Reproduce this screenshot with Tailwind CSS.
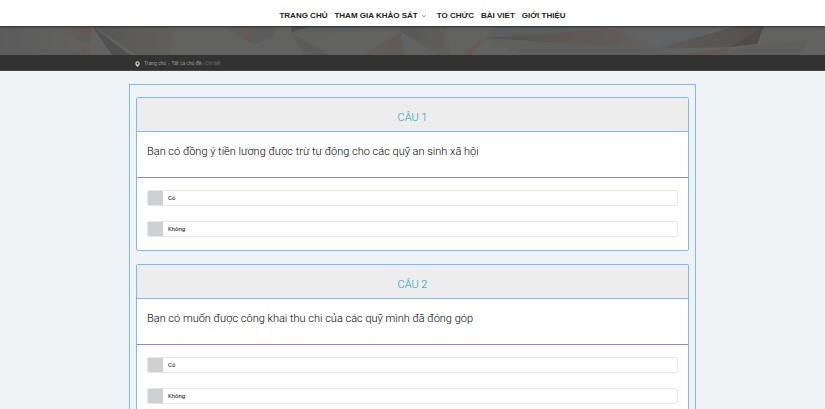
<!DOCTYPE html>
<html lang="vi">
<head>
  <meta charset="UTF-8" />
  <meta name="viewport" content="width=device-width, initial-scale=1.0" />
  <title>Khảo sát</title>
  <script src="https://cdn.jsdelivr.net/npm/@tailwindcss/browser@4"></script>
</head>
<body class="bg-[#eff3f5] font-[Roboto,sans-serif] text-black">
  <!-- Menu -->
  <header class="relative bg-white shadow-[0_1px_2px_rgba(0,0,0,0.5)]">
    <nav class="flex h-[26px] items-center justify-center gap-[7px] pt-[5px] pl-5 font-['Liberation_Sans',sans-serif] text-[8px] font-bold whitespace-nowrap text-[#222222]">
      <a href="#">TRANG CHỦ</a>
      <a href="#" class="flex items-center gap-1">
        THAM GIA KHẢO SÁT
        <svg class="mr-1 h-1 w-1" viewBox="0 0 4 4" fill="none" stroke="#555555" stroke-width="0.8"><path d="M0.4 1.2 2 2.8 3.6 1.2" /></svg>
      </a>
      <a href="#">TỔ CHỨC</a>
      <a href="#">BÀI VIẾT</a>
      <a href="#">GIỚI THIỆU</a>
    </nav>
  </header>

  <!-- Banner -->
  <div class="h-[29px] bg-[#626261]">
    <svg class="h-full w-full" viewBox="0 0 825 29" preserveAspectRatio="none">
      <defs>
        <linearGradient id="warm"><stop offset="0" stop-color="#60605f" /><stop offset="1" stop-color="#615a56" /></linearGradient>
        <linearGradient id="cool"><stop offset="0" stop-color="#565857" /><stop offset="1" stop-color="#625f5b" /></linearGradient>
        <linearGradient id="dark"><stop offset="0" stop-color="#5e5d5c" /><stop offset="1" stop-color="#534f4d" /></linearGradient>
        <linearGradient id="left"><stop offset="0" stop-color="#5b5c5b" /><stop offset="1" stop-color="#636261" /></linearGradient>
        <linearGradient id="beam"><stop offset="0" stop-color="#535452" /><stop offset="0.6" stop-color="#5f5955" /><stop offset="1" stop-color="#62605e" /></linearGradient>
      </defs>
      <path d="M0 0H45L90 19 70 29H0Z" fill="url(#left)" />
      <path d="M45 0H91V19Z" fill="url(#warm)" />
      <path d="M90 19V29H70Z" fill="#625d5a" />
      <path d="M92 0H176L170 29H137Z" fill="url(#cool)" />
      <path d="M92 0 130 29H112Z" fill="#505050" />
      <path d="M221 0H254V19Z" fill="url(#warm)" />
      <path d="M254 19 275 10V0H254Z" fill="#5d5d5d" />
      <path d="M291 0H310L291 7Z" fill="#4f5050" />
      <path d="M310 0H400L401 5 291 7Z" fill="#5d5e5e" />
      <path d="M291 7 330 29H304Z" fill="#5b5b5a" />
      <path d="M401 6 404 29H362Z" fill="url(#warm)" />
      <path d="M400 0H446L452 29H439L401 6Z" fill="url(#cool)" />
      <path d="M484 12 497 0H600V3Z" fill="#5b5f5f" />
      <path d="M484 12 472 29H462Z" fill="#675b53" />
      <path d="M484 12 520 29H680L655 23Z" fill="#5f605e" />
      <path d="M484 12 618 2 655 23Z" fill="url(#beam)" />
      <path d="M618 2H736L655 23Z" fill="#606263" />
      <path d="M655 23 737 0H764L730 21Z" fill="url(#dark)" />
      <path d="M730 21 764 0 757 18Z" fill="#504b4a" />
      <path d="M677 29 730 22 725 29Z" fill="#615a56" />
      <path d="M735 23 808 14 800 29H725Z" fill="#5f5f5e" />
    </svg>
  </div>

  <!-- Breadcrumb -->
  <div class="border-b border-[#444444] bg-[#323232]">
    <div class="mx-auto flex h-[15px] max-w-[567px] items-center pt-[2px] pl-[6px] text-[5px] text-[#999999]">
      <svg class="mr-1 h-[6px] w-[5px]" viewBox="0 0 5 6"><path fill="#cccccc" fill-rule="evenodd" d="M2.5 0.3A2.2 2.2 0 0 0 .3 2.5C.3 4 1.5 5.1 2.5 6 3.5 5.1 4.7 4 4.7 2.5A2.2 2.2 0 0 0 2.5.3ZM2.5 1.6A.9.9 0 1 1 2.5 3.4.9.9 0 0 1 2.5 1.6Z" /></svg>
      <a href="#">Trang chủ</a>
      <span class="mx-[2px]">›</span>
      <a href="#">Tất cả chủ đề</a>
      <span class="mx-px">›</span>
      <span class="text-[#707070]">Chi tiết</span>
    </div>
  </div>

  <!-- Danh sách câu hỏi -->
  <main class="mx-auto mt-[13px] flex max-w-[567px] flex-col gap-[13px] border border-[#7db8fa] px-[6px] py-3">
    <fieldset class="rounded-[2px] border border-[#7db8fa] bg-white">
      <h2 class="border-b border-[#7db8fa] bg-[#ededed] pt-3 pb-[5px] text-center text-[11px] leading-4 font-light text-[#17a2b8]">CÂU 1</h2>
      <p class="border-b border-[#8c83f7] px-[10px] pt-3 pb-[17px] text-[11px] leading-4 font-light">Bạn có đồng ý tiền lương được trừ tự động cho các quỹ an sinh xã hội</p>
      <div class="flex flex-col gap-[15px] px-[10px] pt-3 pb-[13px]">
        <label class="flex h-4 items-center overflow-hidden rounded-[2px] border border-[#e4e6e8] text-[6px]">
          <input type="radio" name="cau1" class="h-full w-[15px] appearance-none bg-[#ced0d2] checked:bg-[#17a2b8]" />
          <span class="pb-px pl-[5px]">Có</span>
        </label>
        <label class="flex h-4 items-center overflow-hidden rounded-[2px] border border-[#e4e6e8] text-[6px]">
          <input type="radio" name="cau1" class="h-full w-[15px] appearance-none bg-[#ced0d2] checked:bg-[#17a2b8]" />
          <span class="pb-px pl-[5px]">Không</span>
        </label>
      </div>
    </fieldset>

    <fieldset class="rounded-[2px] border border-[#7db8fa] bg-white">
      <h2 class="border-b border-[#7db8fa] bg-[#ededed] pt-3 pb-[5px] text-center text-[11px] leading-4 font-light text-[#17a2b8]">CÂU 2</h2>
      <p class="border-b border-[#8c83f7] px-[10px] pt-3 pb-[17px] text-[11px] leading-4 font-light">Bạn có muốn được công khai thu chi của các quỹ mình đã đóng góp</p>
      <div class="flex flex-col gap-[15px] px-[10px] pt-3 pb-[13px]">
        <label class="flex h-4 items-center overflow-hidden rounded-[2px] border border-[#e4e6e8] text-[6px]">
          <input type="radio" name="cau2" class="h-full w-[15px] appearance-none bg-[#ced0d2] checked:bg-[#17a2b8]" />
          <span class="pb-px pl-[5px]">Có</span>
        </label>
        <label class="flex h-4 items-center overflow-hidden rounded-[2px] border border-[#e4e6e8] text-[6px]">
          <input type="radio" name="cau2" class="h-full w-[15px] appearance-none bg-[#ced0d2] checked:bg-[#17a2b8]" />
          <span class="pb-px pl-[5px]">Không</span>
        </label>
      </div>
    </fieldset>
  </main>
</body>
</html>
